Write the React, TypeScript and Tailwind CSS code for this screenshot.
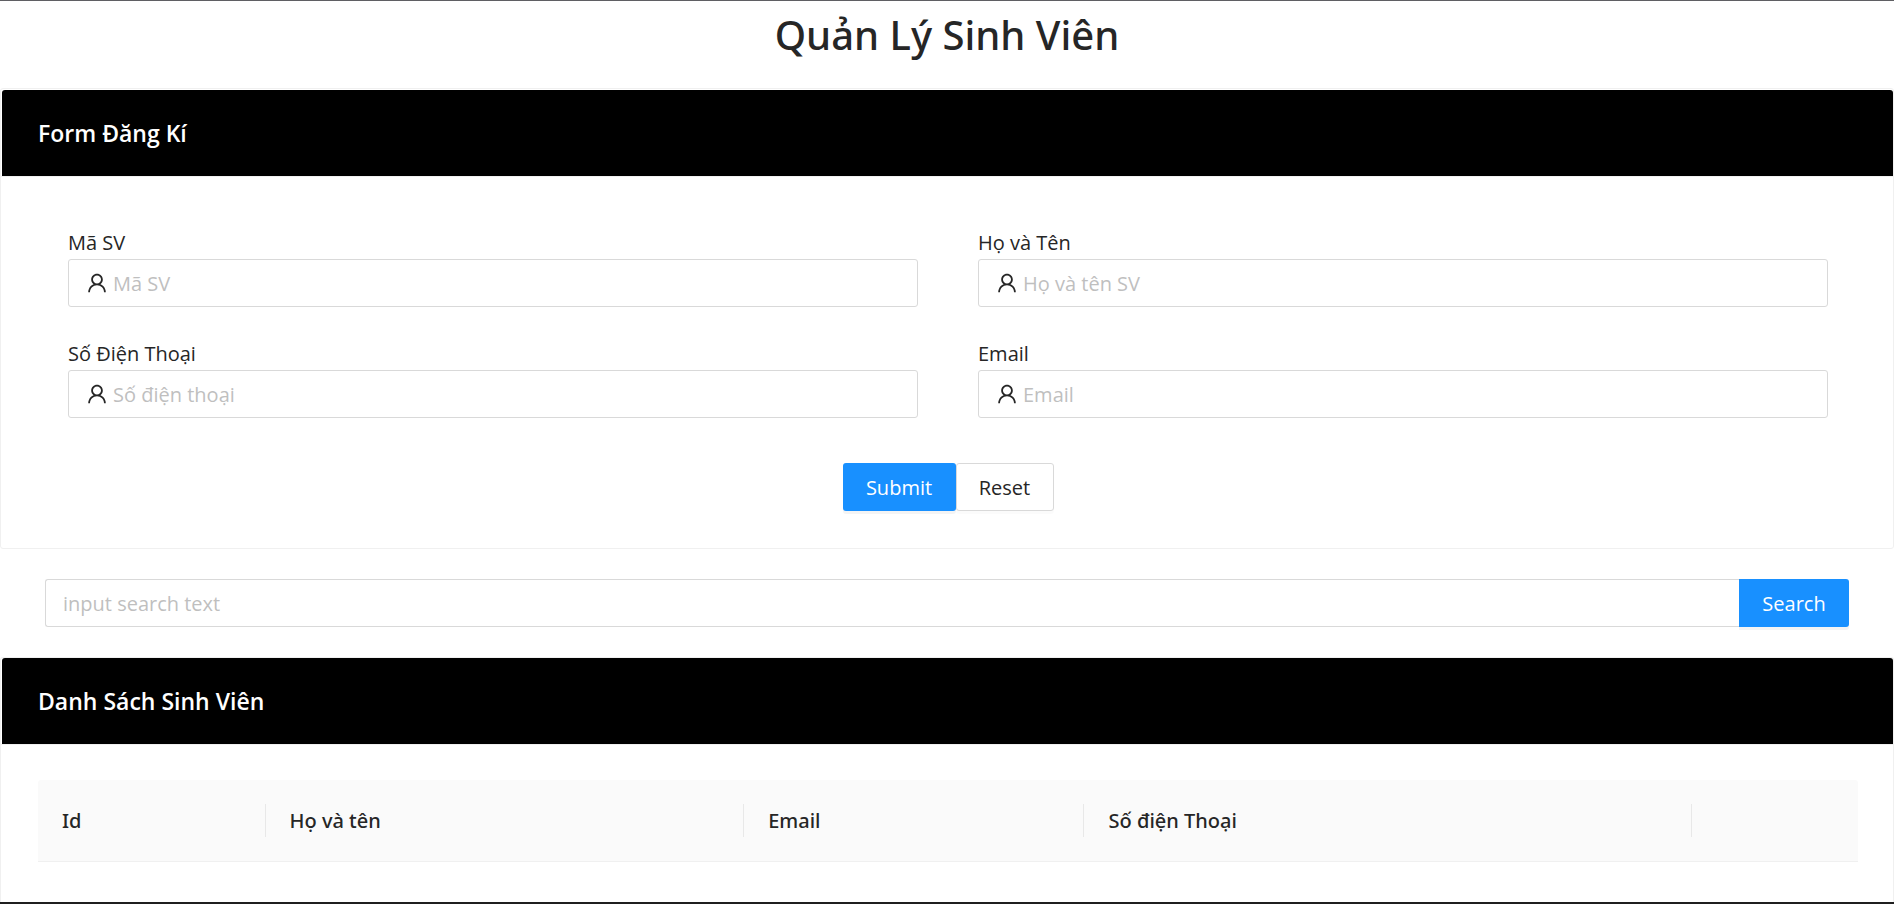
import { useState } from "react";
import type { FormEvent, ReactNode } from "react";
import { AiOutlineUser } from "react-icons/ai";

const fields = [
  { id: "maSV", label: "Mã SV", placeholder: "Mã SV" },
  { id: "hoTen", label: "Họ và Tên", placeholder: "Họ và tên SV" },
  { id: "soDienThoai", label: "Số Điện Thoại", placeholder: "Số điện thoại" },
  { id: "email", label: "Email", placeholder: "Email" },
];

const columns = [
  { title: "Id", width: "w-[12.5%]" },
  { title: "Họ và tên", width: "w-[26.3%]" },
  { title: "Email", width: "w-[18.7%]" },
  { title: "Số điện Thoại", width: "w-[33.4%]" },
  { title: "", width: "w-[9.1%]" },
];

function Card({ title, className, children }: { title: string; className: string; children: ReactNode }) {
  return (
    <section className={`rounded-[3px] border border-[#f0f0f0] bg-white ${className}`}>
      <h2 className="ml-px rounded-t-[3px] bg-black px-9 py-6 text-[23px] leading-[38px] font-semibold text-white">
        {title}
      </h2>
      {children}
    </section>
  );
}

function Field({ id, label, placeholder }: { id: string; label: string; placeholder: string }) {
  return (
    <div className="flex flex-col">
      <label htmlFor={id} className="leading-[33px]">
        {label}
      </label>
      <div className="flex h-12 items-center gap-1 rounded-[3px] border border-[#d9d9d9] px-4">
        <AiOutlineUser className="size-6 shrink-0" aria-hidden="true" />
        <input
          id={id}
          name={id}
          placeholder={placeholder}
          className="min-w-0 flex-1 bg-transparent outline-none placeholder:text-[#bfbfbf]"
        />
      </div>
    </div>
  );
}

export default function App() {
  const [keyword, setKeyword] = useState("");
  const stop = (event: FormEvent) => event.preventDefault();

  return (
    <main className="flex min-h-screen flex-col border-t border-b-2 border-t-[#5f5f63] border-b-[#1f1f1f] bg-white font-['Open_Sans','Noto_Sans',sans-serif] text-[20px] leading-[33px] text-[#262626]">
      <h1 className="mb-[19px] text-center font-['Noto_Sans','Open_Sans',sans-serif] text-[40px] leading-[68px] font-medium">
        Quản Lý Sinh Viên
      </h1>

      <Card title="Form Đăng Kí" className="pt-px">
        <form onSubmit={stop} className="border-t border-[#f0f0f0] pt-[49px] pr-[65px] pb-[37px] pl-[67px]">
          <div className="grid grid-cols-2 gap-x-[60px] gap-y-[30px]">
            {fields.map((field) => (
              <Field key={field.id} {...field} />
            ))}
          </div>
          <div className="mt-[45px] flex justify-center">
            <button
              type="submit"
              className="h-12 w-[113px] rounded-[3px] bg-[#1890ff] text-white shadow-[0_3px_0_rgba(0,0,0,0.045)]"
            >
              Submit
            </button>
            <button
              type="reset"
              className="h-12 w-[98px] rounded-[3px] border border-[#d9d9d9] bg-white shadow-[0_3px_0_rgba(0,0,0,0.016)]"
            >
              Reset
            </button>
          </div>
        </form>
      </Card>

      <form onSubmit={stop} role="search" className="flex px-[45px] py-[30px]">
        <input
          type="text"
          aria-label="input search text"
          placeholder="input search text"
          value={keyword}
          onChange={(event) => setKeyword(event.target.value)}
          className="h-12 min-w-0 flex-1 rounded-l-[3px] border border-r-0 border-[#d9d9d9] px-[17px] outline-none placeholder:text-[#bfbfbf]"
        />
        <button
          type="submit"
          className="h-12 w-[110px] rounded-r-[3px] bg-[#1890ff] text-white shadow-[0_3px_0_rgba(0,0,0,0.045)]"
        >
          Search
        </button>
      </form>

      <Card title="Danh Sách Sinh Viên" className="flex-1 rounded-b-none border-b-0">
        <div className="border-t border-[#f0f0f0] pt-[35px] pr-[35px] pb-9 pl-[37px]">
          <table className="w-full table-fixed border-separate border-spacing-0 text-left">
            <thead>
              <tr>
                {columns.map(({ title, width }) => (
                  <th
                    key={width}
                    scope="col"
                    className={`${width} group border-b border-[#f0f0f0] bg-[#fafafa] py-6 font-['Noto_Sans','Open_Sans',sans-serif] font-medium first:rounded-tl-[3px] last:rounded-tr-[3px]`}
                  >
                    <div className="h-[33px] border-r border-[#e8e8e8] px-6 group-last:border-r-0">{title}</div>
                  </th>
                ))}
              </tr>
            </thead>
            <tbody />
          </table>
        </div>
      </Card>
    </main>
  );
}
